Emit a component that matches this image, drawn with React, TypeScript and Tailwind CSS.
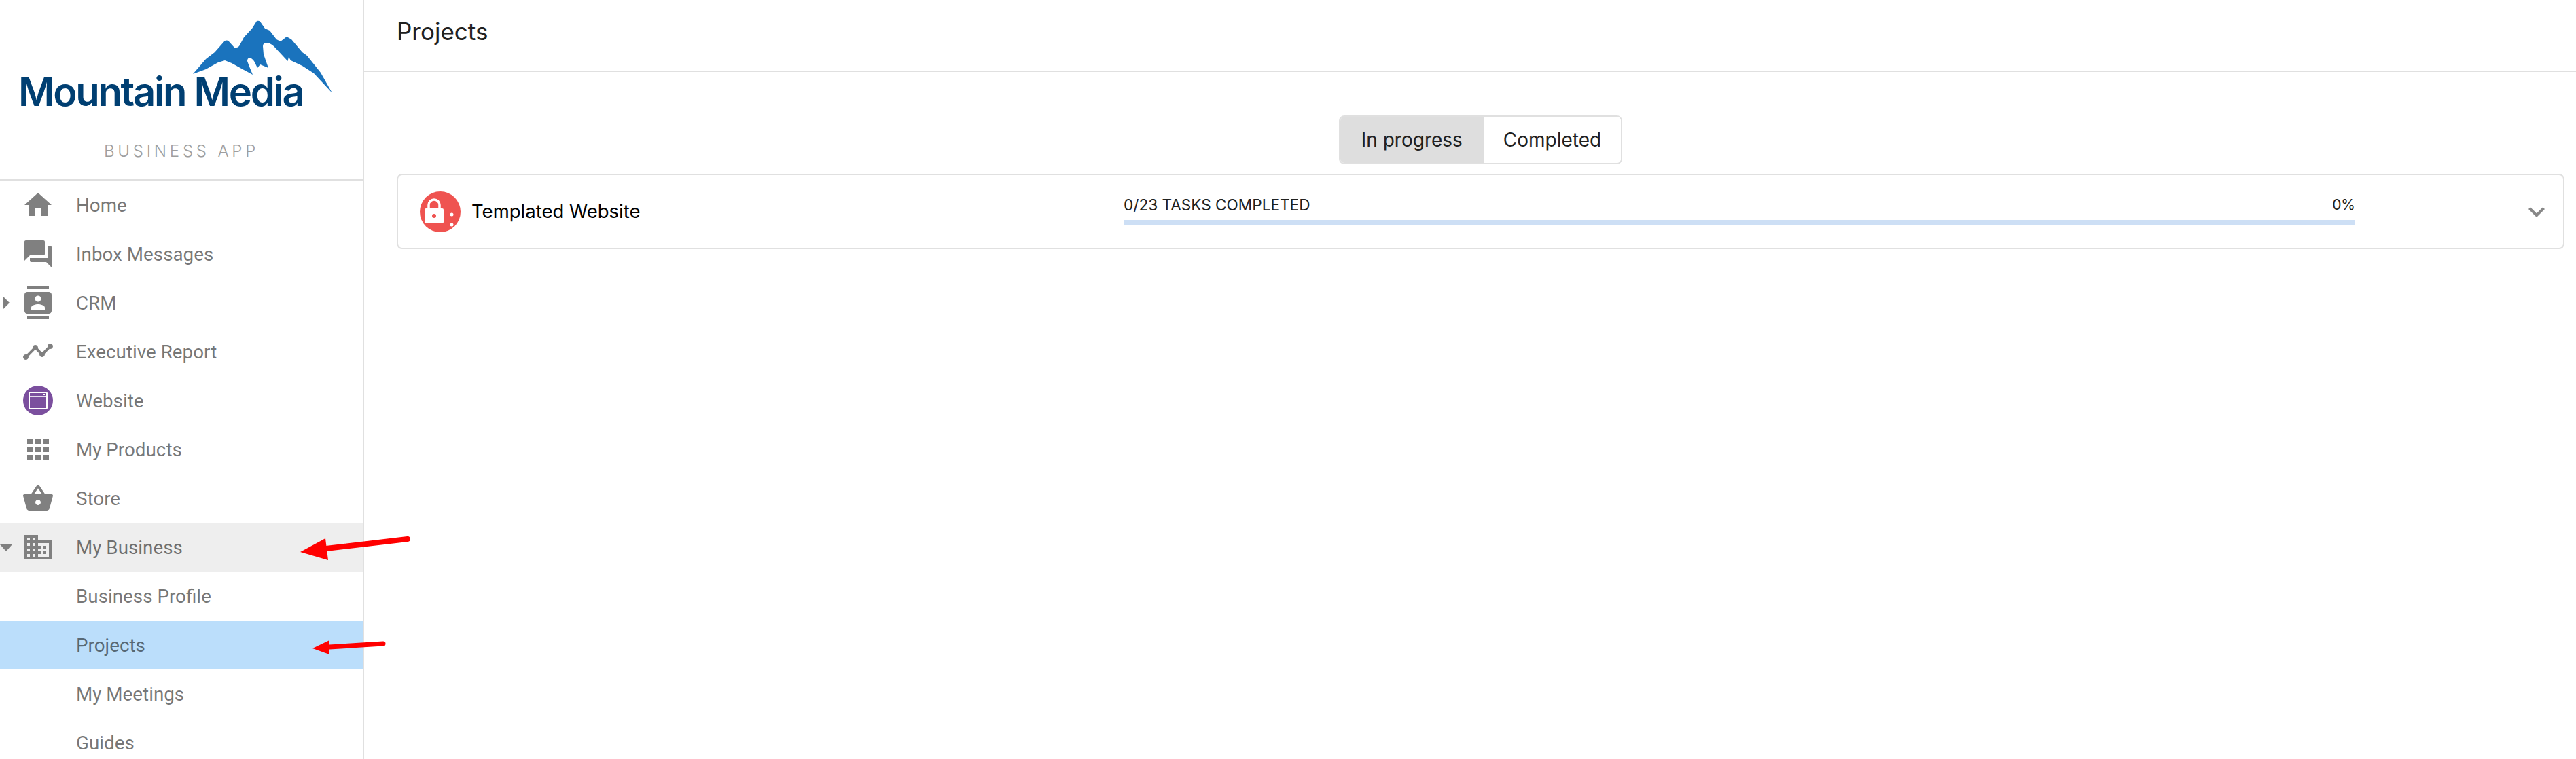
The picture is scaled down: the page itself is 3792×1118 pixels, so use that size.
import React from 'react';

function MaterialIcon({ d }: { d: string }) {
  return (
    <svg viewBox="0 0 24 24" className="w-12 h-12 fill-[#808080]">
      <path d={d} />
    </svg>
  );
}

function WebsiteIcon() {
  return (
    <div className="w-11 h-11 rounded-full bg-[#7b4f9e] flex items-center justify-center">
      <svg viewBox="0 0 30 30" className="w-[30px] h-[30px]">
        <rect x="2" y="3" width="26" height="24" rx="1" fill="none" stroke="#fff" strokeWidth="2" />
        <rect x="3" y="8" width="24" height="2" fill="#fff" fillOpacity="0.8" />
        <rect x="23" y="5" width="2" height="2" fill="#fff" />
      </svg>
    </div>
  );
}

const paths = {
  home: 'M10 20v-6h4v6h5v-8h3L12 3 2 12h3v8z',
  forum: 'M21 6h-2v9H6v2c0 .55.45 1 1 1h11l4 4V7c0-.55-.45-1-1-1zm-4 6V3c0-.55-.45-1-1-1H3c-.55 0-1 .45-1 1v14l4-4h10c.55 0 1-.45 1-1z',
  contacts: 'M20 0H4v2h16V0zM4 24h16v-2H4v2zM20 4H4c-1.1 0-2 .9-2 2v12c0 1.1.9 2 2 2h16c1.1 0 2-.9 2-2V6c0-1.1-.9-2-2-2zm-8 2.75c1.24 0 2.25 1.01 2.25 2.25s-1.01 2.25-2.25 2.25S9.75 10.24 9.75 9 10.76 6.75 12 6.75zM17 17H7v-1.5c0-1.67 3.33-2.5 5-2.5s5 .83 5 2.5V17z',
  timeline: 'M23 8c0 1.1-.9 2-2 2-.18 0-.35-.02-.51-.07l-3.56 3.55c.05.16.07.34.07.52 0 1.1-.9 2-2 2s-2-.9-2-2c0-.18.02-.36.07-.52l-2.55-2.55c-.16.05-.34.07-.52.07s-.36-.02-.52-.07l-4.55 4.56c.05.16.07.33.07.51 0 1.1-.9 2-2 2s-2-.9-2-2 .9-2 2-2c.18 0 .35.02.51.07l4.56-4.55C8.02 9.36 8 9.18 8 9c0-1.1.9-2 2-2s2 .9 2 2c0 .18-.02.36-.07.52l2.55 2.55c.16-.05.34-.07.52-.07s.36.02.52.07l3.55-3.56C19.02 8.35 19 8.18 19 8c0-1.1.9-2 2-2s2 .9 2 2z',
  apps: 'M4 8h4V4H4v4zm6 12h4v-4h-4v4zm-6 0h4v-4H4v4zm0-6h4v-4H4v4zm6 0h4v-4h-4v4zm6-10v4h4V4h-4zm-6 4h4V4h-4v4zm6 6h4v-4h-4v4zm0 6h4v-4h-4v4z',
  basket: 'M17.21 9l-4.38-6.56c-.19-.28-.51-.42-.83-.42-.32 0-.64.14-.83.43L6.79 9H2c-.55 0-1 .45-1 1 0 .09.01.18.04.27l2.54 9.27c.23.84 1 1.46 1.92 1.46h13c.92 0 1.69-.62 1.93-1.46l2.54-9.27L23 10c0-.55-.45-1-1-1h-4.79zM9 9l3-4.4L15 9H9zm3 8c-1.1 0-2-.9-2-2s.9-2 2-2 2 .9 2 2-.9 2-2 2z',
  business: 'M12 7V3H2v18h20V7H12zM6 19H4v-2h2v2zm0-4H4v-2h2v2zm0-4H4V9h2v2zm0-4H4V5h2v2zm4 12H8v-2h2v2zm0-4H8v-2h2v2zm0-4H8V9h2v2zm0-4H8V5h2v2zm10 12h-8v-2h2v-2h-2v-2h2v-2h-2V9h8v10zm-2-8h-2v2h2v-2zm0 4h-2v2h2v-2z',
};

interface NavRowProps {
  label: string;
  icon?: React.ReactNode;
  caret?: 'right' | 'down';
  className?: string;
}

function NavRow({ label, icon, caret, className = '' }: NavRowProps) {
  return (
    <div className={`relative flex items-center h-[72px] shrink-0 pl-8 ${className}`}>
      {caret === 'right' && (
        <span className="absolute left-1 top-[26px] border-y-[10px] border-l-[10px] border-y-transparent border-l-[#808080]" />
      )}
      {caret === 'down' && (
        <span className="absolute left-0 top-8 border-x-[9px] border-t-[10px] border-x-transparent border-t-[#808080]" />
      )}
      <div className="w-12 h-12 flex items-center justify-center shrink-0">{icon}</div>
      <span className="ml-8 pt-0.5 text-[27.8px] text-black/54">{label}</span>
    </div>
  );
}

function Logo() {
  return (
    <div className="relative h-[266px] border-b-2 border-[#e0e0e0] shrink-0">
      <svg viewBox="0 0 534 266" className="w-[534px] h-[266px]">
        <path
          fill="#1a73bd"
          d="M284 109 L303 87 L316 77 L331 60 Q334 59 336 60 L345 70 Q349 71 352 68 L359 55 L371 42 L378 31 Q381 30 383 32 L390 42 L397 45 L407 58 L413 61 L422 54 L429 58 L445 77 L452 82 L472 107 L489 137 L462 108 L445 97 L428 89 L425 84 L423.5 90 L403 68 Q397 63 393 63 Q387 63 387 68 L388 80 L395 100 L383 95 L379 100 L374 90 Q370 85 367 85 Q364 86 364 90 L367 98 L372 110 L359 103 L341 93 L331 89 L321 92 L303 102 Z"
        />
      </svg>
      <div className="absolute left-[27px] top-[97px] font-['Inter',sans-serif] font-semibold text-[58px] leading-[76px] tracking-[-2.3px] text-[#003f72] whitespace-nowrap">
        Mountain Media
      </div>
      <div className="absolute left-0 right-0 top-[208px] text-center font-['Inter',sans-serif] font-light text-2xl leading-[30px] tracking-[4.8px] text-[#9e9e9e]">
        BUSINESS APP
      </div>
    </div>
  );
}

function ProjectIcon() {
  return (
    <svg viewBox="0 0 60 60" className="w-[60px] h-[60px] shrink-0">
      <circle cx="30" cy="30" r="30" fill="#ef5350" />
      <path d="M13 25v-5a8 8 0 0 1 16 0v5" fill="none" stroke="#fff" strokeWidth="3.5" />
      <rect x="7" y="25" width="28" height="22" rx="2" fill="#fff" />
      <circle cx="21" cy="36" r="3" fill="#ef5350" />
      <circle cx="47" cy="34" r="2.5" fill="#fff" />
      <circle cx="47" cy="49" r="2.5" fill="#fff" />
    </svg>
  );
}

export default function App() {
  return (
    <div className="relative flex w-[3792px] h-[1118px] overflow-hidden bg-white">
      <aside className="w-[536px] shrink-0 border-r-2 border-[#e0e0e0] flex flex-col font-['Roboto',sans-serif]">
        <Logo />
        <NavRow label="Home" icon={<MaterialIcon d={paths.home} />} />
        <NavRow label="Inbox Messages" icon={<MaterialIcon d={paths.forum} />} />
        <NavRow label="CRM" caret="right" icon={<MaterialIcon d={paths.contacts} />} />
        <NavRow label="Executive Report" icon={<MaterialIcon d={paths.timeline} />} />
        <NavRow label="Website" icon={<WebsiteIcon />} />
        <NavRow label="My Products" icon={<MaterialIcon d={paths.apps} />} />
        <NavRow label="Store" icon={<MaterialIcon d={paths.basket} />} />
        <NavRow label="My Business" caret="down" className="bg-[#eeeeee]" icon={<MaterialIcon d={paths.business} />} />
        <NavRow label="Business Profile" />
        <NavRow label="Projects" className="bg-[#bbdefb]" />
        <NavRow label="My Meetings" />
        <NavRow label="Guides" />
      </aside>

      <main className="flex-1 flex flex-col font-['Inter',sans-serif] text-[#212121]">
        <div className="h-[106px] shrink-0 border-b-2 border-[#e0e0e0] pl-12 flex items-center pb-3">
          <h1 className="text-[35px] font-normal">Projects</h1>
        </div>
        <div className="pl-12 pr-[17px] pt-16">
          <div className="flex justify-center">
            <div className="flex h-[72px] rounded-lg border-2 border-[#e0e0e0] overflow-hidden text-[28px]">
              <div className="flex items-center pl-[31px] pr-[31px] bg-[#dedede]">In progress</div>
              <div className="flex items-center px-[29px] bg-white">Completed</div>
            </div>
          </div>
          <div className="mt-[14px] h-[111px] rounded-lg border-2 border-[#e0e0e0] flex items-center pl-8 pr-[15px]">
            <div className="w-[1036px] shrink-0 flex items-center gap-4">
              <ProjectIcon />
              <span className="text-[27.5px] text-black">Templated Website</span>
            </div>
            <div className="w-[1813px] shrink-0">
              <div className="flex justify-between items-center text-[22.6px] leading-[30px] -mt-1">
                <span>0/23 TASKS COMPLETED</span>
                <span className="text-[21px]">0%</span>
              </div>
              <div className="mt-[7px] h-2 bg-[#cddff5]" />
            </div>
            <svg viewBox="0 0 24 24" className="ml-auto w-12 h-12 fill-[#888888]">
              <path d="M16.59 8.59 12 13.17 7.41 8.59 6 10l6 6 6-6z" />
            </svg>
          </div>
        </div>
      </main>

      {/* red annotation arrows */}
      <svg viewBox="0 0 3792 1118" className="absolute inset-0 w-full h-full pointer-events-none">
        <path d="M480 808 L600 794" stroke="#ff0000" strokeWidth="8" strokeLinecap="round" fill="none" />
        <path d="M442 813 L479 793 L483 825 Z" fill="#ff0000" />
        <path d="M485 953 L564 948" stroke="#ff0000" strokeWidth="7" strokeLinecap="round" fill="none" />
        <path d="M460 955 L485 943 L485 964 Z" fill="#ff0000" />
      </svg>
    </div>
  );
}
